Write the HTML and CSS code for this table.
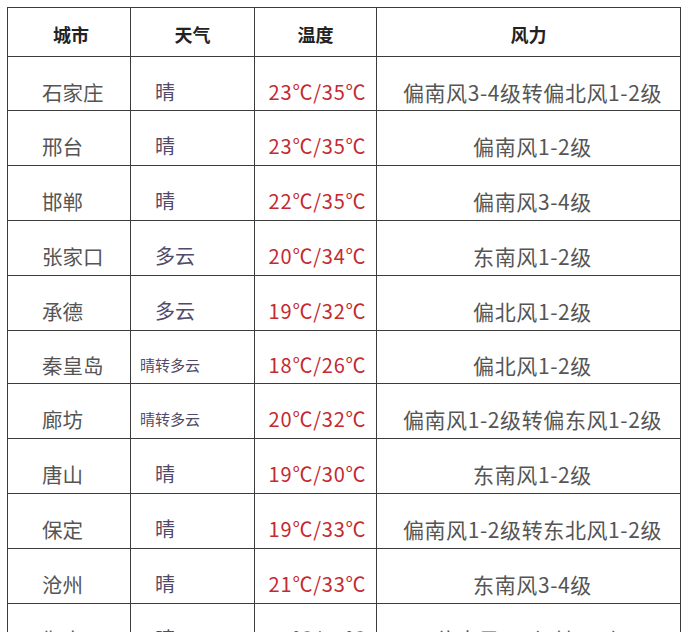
FILE: index.html
```html
<!DOCTYPE html>
<html lang="zh">
<head>
<meta charset="utf-8">
<link rel="stylesheet" href="styles.css">
</head>
<body>
<table class="weather">
  <colgroup>
    <col class="c-city"><col class="c-wx"><col class="c-temp"><col class="c-wind">
  </colgroup>
  <thead>
    <tr class="head">
      <th>城市</th><th>天气</th><th>温度</th><th>风力</th>
    </tr>
  </thead>
  <tbody>
    <tr class="r54"><td class="city">石家庄</td><td class="wx">晴</td><td class="temp">23℃/35℃</td><td class="wind">偏南风3-4级转偏北风1-2级</td></tr>
    <tr><td class="city">邢台</td><td class="wx">晴</td><td class="temp">23℃/35℃</td><td class="wind">偏南风1-2级</td></tr>
    <tr><td class="city">邯郸</td><td class="wx">晴</td><td class="temp">22℃/35℃</td><td class="wind">偏南风3-4级</td></tr>
    <tr><td class="city">张家口</td><td class="wx">多云</td><td class="temp">20℃/34℃</td><td class="wind">东南风1-2级</td></tr>
    <tr><td class="city">承德</td><td class="wx">多云</td><td class="temp">19℃/32℃</td><td class="wind">偏北风1-2级</td></tr>
    <tr class="r53"><td class="city">秦皇岛</td><td class="wx small">晴转多云</td><td class="temp">18℃/26℃</td><td class="wind">偏北风1-2级</td></tr>
    <tr><td class="city">廊坊</td><td class="wx small">晴转多云</td><td class="temp">20℃/32℃</td><td class="wind">偏南风1-2级转偏东风1-2级</td></tr>
    <tr><td class="city">唐山</td><td class="wx">晴</td><td class="temp">19℃/30℃</td><td class="wind">东南风1-2级</td></tr>
    <tr><td class="city">保定</td><td class="wx">晴</td><td class="temp">19℃/33℃</td><td class="wind">偏南风1-2级转东北风1-2级</td></tr>
    <tr><td class="city">沧州</td><td class="wx">晴</td><td class="temp">21℃/33℃</td><td class="wind">东南风3-4级</td></tr>
    <tr><td class="city">衡水</td><td class="wx">晴</td><td class="temp">23℃/35℃</td><td class="wind">偏南风3-4级转1-2级</td></tr>
  </tbody>
</table>
</body>
</html>
```

FILE: styles.css
```css
html, body {
  margin: 0;
  padding: 0;
  background: #ffffff;
  overflow: hidden;
}
body {
  padding: 7px 0 0 7px;
  font-family: "Noto Sans CJK SC", "Noto Sans", sans-serif;
}
.weather {
  border-collapse: collapse;
  table-layout: fixed;
  width: 673px;
}
.c-city { width: 123px; }
.c-wx { width: 124px; }
.c-temp { width: 122px; }
.c-wind { width: 304px; }
.weather th,
.weather td {
  border: 1px solid #3c3c3c;
  padding: 0;
  white-space: nowrap;
  overflow: hidden;
}
.weather .head th {
  height: 49px;
  font-size: 18px;
  font-weight: bold;
  color: #222222;
  text-align: center;
  padding-top: 4px;
  box-sizing: border-box;
  line-height: 22px;
  font-family: "Noto Sans CJK SC", serif;
}
.weather .head th:first-child { padding-left: 4px; }
.weather tbody tr { height: 55px; }
.weather tbody tr.r54 { height: 54px; }
.weather tbody tr.r53 { height: 53px; }
.weather td {
  font-size: 20px;
  line-height: 24px;
  padding-top: 16px;
  box-sizing: border-box;
  vertical-align: middle;
  color: #555555;
}
.weather td.city {
  padding-left: 34px;
  font-size: 20.5px;
}
.weather td.wx {
  padding-left: 24px;
  color: #524a68;
}
.weather td.wx.small {
  font-size: 15px;
  padding-left: 9px;
}
.weather td.temp {
  text-align: center;
  color: #c42a30;
  padding-left: 4px;
  letter-spacing: 0.8px;
}
.weather td.wind {
  text-align: center;
  padding-left: 8px;
  font-size: 21px;
  letter-spacing: 0.6px;
}
```
